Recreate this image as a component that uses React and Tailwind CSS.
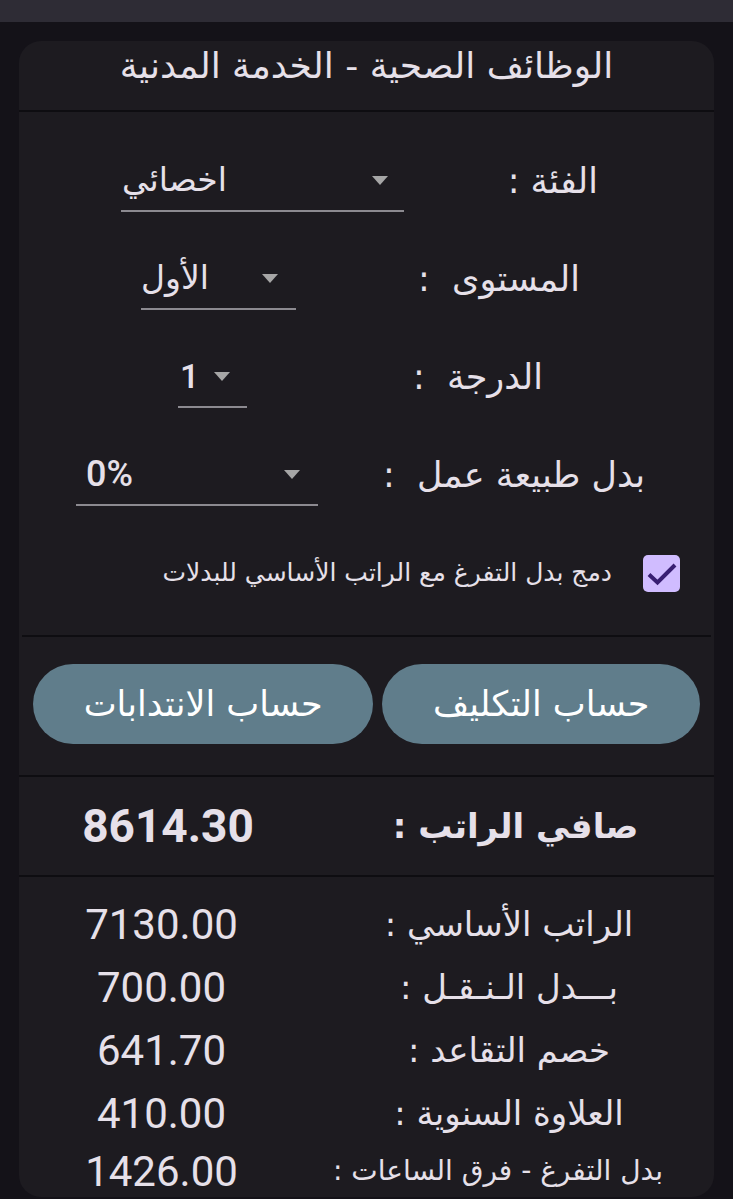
import React from "react";

function Arrow() {
  return (
    <svg width="16" height="9" viewBox="0 0 16 9" className="shrink-0">
      <path d="M0 0H16L8 9Z" fill="#a6a6a6" />
    </svg>
  );
}

function Spinner({ w, pl, pr, children }) {
  return (
    <div dir="ltr" className={`flex h-[62px] shrink-0 items-center justify-between border-b-2 border-[#8c8a90] ${w} ${pl} ${pr}`}>
      {children}
      <Arrow />
    </div>
  );
}

const ar = "font-['DejaVu_Sans',sans-serif]";
const num = "font-['Roboto',sans-serif]";

export default function App() {
  return (
    <div className="min-h-[1199px] bg-[#141218] text-[#e6e0e9]">
      <div className="h-[22px] bg-[#2e2c35]" />
      <div dir="rtl" className="mx-[19px] mt-[19px] overflow-hidden rounded-[22px] bg-[#1d1b20]">
        {/* header */}
        <div className="flex h-[71px] justify-center border-b-2 border-[#0e0d11] pt-[1px]">
          <span className={`${ar} text-[36px] leading-[48px]`}>الوظائف الصحية - الخدمة المدنية</span>
        </div>

        {/* form */}
        <div className="pt-[20px] pb-[13px]">
          <div className="flex h-[98px] items-center pr-[116px]">
            <div className={`${ar} w-[194px] shrink-0 text-[35px]`}>الفئة :</div>
            <Spinner w="w-[283px]" pl="pl-[1px]" pr="pr-[16px]">
              <span className={`${ar} text-[33px]`}>اخصائي</span>
            </Spinner>
          </div>
          <div className="flex h-[98px] items-center pr-[134px]">
            <div className={`${ar} w-[284px] shrink-0 text-[35px]`}>المستوى&nbsp; :</div>
            <Spinner w="w-[155px]" pl="pl-[0px]" pr="pr-[18px]">
              <span className={`${ar} text-[33px]`}>الأول</span>
            </Spinner>
          </div>
          <div className="flex h-[98px] items-center pr-[171px]">
            <div className={`${ar} w-[296px] shrink-0 text-[35px]`}>الدرجة&nbsp; :</div>
            <Spinner w="w-[69px]" pl="pl-[2px]" pr="pr-[17px]">
              <span className={`${num} text-[34px] font-medium`}>1</span>
            </Spinner>
          </div>
          <div className="flex h-[98px] items-center pr-[69px]">
            <div className={`${ar} w-[327px] shrink-0 text-[35px]`}>بدل طبيعة عمل&nbsp; :</div>
            <Spinner w="w-[242px]" pl="pl-[10px]" pr="pr-[18px]">
              <span className={`${num} text-[36px] font-medium`}>0%</span>
            </Spinner>
          </div>
          <div className="flex h-[98px] items-center gap-[31px] pr-[34px]">
            <div className="flex h-[37px] w-[37px] shrink-0 items-center justify-center rounded-[5px] bg-[#d0bcff]">
              <svg width="37" height="37" viewBox="0 0 37 37" fill="none">
                <path d="M6 19.5L14.5 27.5L32 10" stroke="#381e72" strokeWidth="4" />
              </svg>
            </div>
            <span className={`${ar} text-[25px]`}>دمج بدل التفرغ مع الراتب الأساسي للبدلات</span>
          </div>
        </div>

        {/* buttons */}
        <div className="mx-[3px] border-t-2 border-[#0e0d11]" />
        <div className="flex gap-[9px] px-[14px] pt-[27px] pb-[31px]">
          <button className={`${ar} flex h-[80px] flex-auto items-center justify-center rounded-full bg-[#607d8b] text-[35px] text-white`}>حساب التكليف</button>
          <button className={`${ar} flex h-[80px] flex-auto items-center justify-center rounded-full bg-[#607d8b] text-[35px] text-white`}>حساب الانتدابات</button>
        </div>

        {/* net */}
        <div className="grid h-[102px] grid-cols-[397px_1fr] items-center border-y-2 border-[#0e0d11]">
          <div className={`${ar} text-center text-[34px] font-bold`}>صافي الراتب :</div>
          <div className={`${num} text-center text-[46px] font-bold`}>8614.30</div>
        </div>

        {/* details */}
        <div className="grid grid-cols-[410px_1fr] pt-[16px]">
          <div className={`${ar} flex h-[63px] items-center justify-center text-[34px]`}>الراتب الأساسي :</div>
          <div className={`${num} flex h-[63px] items-center justify-center text-[42px]`}>7130.00</div>
          <div className={`${ar} flex h-[63px] items-center justify-center text-[34px]`}>بـــدل الـنـقـل :</div>
          <div className={`${num} flex h-[63px] items-center justify-center text-[42px]`}>700.00</div>
          <div className={`${ar} flex h-[63px] items-center justify-center text-[34px]`}>خصم التقاعد :</div>
          <div className={`${num} flex h-[63px] items-center justify-center text-[42px]`}>641.70</div>
          <div className={`${ar} flex h-[63px] items-center justify-center text-[34px]`}>العلاوة السنوية :</div>
          <div className={`${num} flex h-[63px] items-center justify-center text-[42px]`}>410.00</div>
          <div className={`${ar} flex h-[52px] items-center justify-center pr-[22px] text-[28px]`}>بدل التفرغ - فرق الساعات :</div>
          <div className={`${num} flex h-[52px] items-center justify-center text-[42px]`}>1426.00</div>
        </div>
      </div>
    </div>
  );
}
